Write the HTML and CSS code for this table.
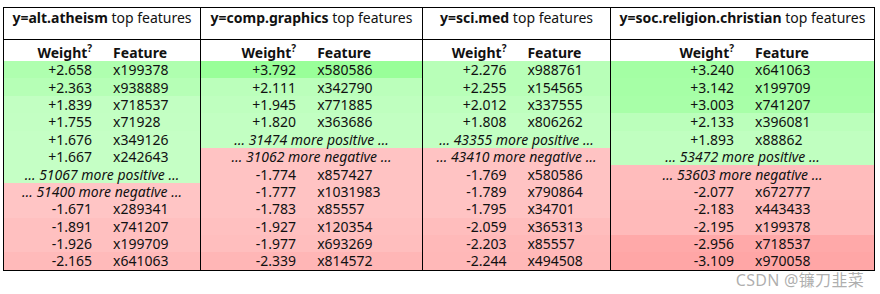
FILE: index.html
```html
<!DOCTYPE html>
<html lang="en">
<head>
  <meta charset="UTF-8">
  <title>eli5 weights</title>
  <link rel="stylesheet" href="styles.css">
</head>
<body>
  <table class="wrapper">
    <colgroup>
      <col class="c1"><col class="c2"><col class="c3"><col class="c4">
    </colgroup>
    <tr class="titles">
      <td><b>y=alt.atheism</b> top features</td>
      <td><b>y=comp.graphics</b> top features</td>
      <td><b>y=sci.med</b> top features</td>
      <td><b>y=soc.religion.christian</b> top features</td>
    </tr>
    <tr>
      <!-- alt.atheism -->
      <td>
        <table class="weights">
          <thead>
            <tr><th class="w">Weight<sup>?</sup></th><th class="f">Feature</th></tr>
          </thead>
          <tbody>
            <tr class="pos" style="--l: 84.4%"><td class="w">+2.658</td><td class="f">x199378</td></tr>
            <tr class="pos" style="--l: 85.6%"><td class="w">+2.363</td><td class="f">x938889</td></tr>
            <tr class="pos" style="--l: 88.0%"><td class="w">+1.839</td><td class="f">x718537</td></tr>
            <tr class="pos" style="--l: 88.3%"><td class="w">+1.755</td><td class="f">x71928</td></tr>
            <tr class="pos" style="--l: 88.7%"><td class="w">+1.676</td><td class="f">x349126</td></tr>
            <tr class="pos" style="--l: 88.7%"><td class="w">+1.667</td><td class="f">x242643</td></tr>
            <tr class="pos" style="--l: 88.7%"><td class="more" colspan="2">&hellip; 51067 more positive &hellip;</td></tr>
            <tr class="neg" style="--l: 88.7%"><td class="more" colspan="2">&hellip; 51400 more negative &hellip;</td></tr>
            <tr class="neg" style="--l: 88.7%"><td class="w">-1.671</td><td class="f">x289341</td></tr>
            <tr class="neg" style="--l: 87.7%"><td class="w">-1.891</td><td class="f">x741207</td></tr>
            <tr class="neg" style="--l: 87.6%"><td class="w">-1.926</td><td class="f">x199709</td></tr>
            <tr class="neg" style="--l: 86.5%"><td class="w">-2.165</td><td class="f">x641063</td></tr>
          </tbody>
        </table>
      </td>
      <!-- comp.graphics -->
      <td>
        <table class="weights">
          <thead>
            <tr><th class="w">Weight<sup>?</sup></th><th class="f">Feature</th></tr>
          </thead>
          <tbody>
            <tr class="pos" style="--l: 80.0%"><td class="w">+3.792</td><td class="f">x580586</td></tr>
            <tr class="pos" style="--l: 86.7%"><td class="w">+2.111</td><td class="f">x342790</td></tr>
            <tr class="pos" style="--l: 87.5%"><td class="w">+1.945</td><td class="f">x771885</td></tr>
            <tr class="pos" style="--l: 88.0%"><td class="w">+1.820</td><td class="f">x363686</td></tr>
            <tr class="pos" style="--l: 88.0%"><td class="more" colspan="2">&hellip; 31474 more positive &hellip;</td></tr>
            <tr class="neg" style="--l: 88.3%"><td class="more" colspan="2">&hellip; 31062 more negative &hellip;</td></tr>
            <tr class="neg" style="--l: 88.3%"><td class="w">-1.774</td><td class="f">x857427</td></tr>
            <tr class="neg" style="--l: 88.3%"><td class="w">-1.777</td><td class="f">x1031983</td></tr>
            <tr class="neg" style="--l: 88.2%"><td class="w">-1.783</td><td class="f">x85557</td></tr>
            <tr class="neg" style="--l: 87.6%"><td class="w">-1.927</td><td class="f">x120354</td></tr>
            <tr class="neg" style="--l: 87.3%"><td class="w">-1.977</td><td class="f">x693269</td></tr>
            <tr class="neg" style="--l: 85.7%"><td class="w">-2.339</td><td class="f">x814572</td></tr>
          </tbody>
        </table>
      </td>
      <!-- sci.med -->
      <td>
        <table class="weights">
          <thead>
            <tr><th class="w">Weight<sup>?</sup></th><th class="f">Feature</th></tr>
          </thead>
          <tbody>
            <tr class="pos" style="--l: 86.0%"><td class="w">+2.276</td><td class="f">x988761</td></tr>
            <tr class="pos" style="--l: 86.1%"><td class="w">+2.255</td><td class="f">x154565</td></tr>
            <tr class="pos" style="--l: 87.2%"><td class="w">+2.012</td><td class="f">x337555</td></tr>
            <tr class="pos" style="--l: 88.1%"><td class="w">+1.808</td><td class="f">x806262</td></tr>
            <tr class="pos" style="--l: 88.1%"><td class="more" colspan="2">&hellip; 43355 more positive &hellip;</td></tr>
            <tr class="neg" style="--l: 88.3%"><td class="more" colspan="2">&hellip; 43410 more negative &hellip;</td></tr>
            <tr class="neg" style="--l: 88.3%"><td class="w">-1.769</td><td class="f">x580586</td></tr>
            <tr class="neg" style="--l: 88.2%"><td class="w">-1.789</td><td class="f">x790864</td></tr>
            <tr class="neg" style="--l: 88.2%"><td class="w">-1.795</td><td class="f">x34701</td></tr>
            <tr class="neg" style="--l: 87.0%"><td class="w">-2.059</td><td class="f">x365313</td></tr>
            <tr class="neg" style="--l: 86.3%"><td class="w">-2.203</td><td class="f">x85557</td></tr>
            <tr class="neg" style="--l: 86.1%"><td class="w">-2.244</td><td class="f">x494508</td></tr>
          </tbody>
        </table>
      </td>
      <!-- soc.religion.christian -->
      <td>
        <table class="weights">
          <thead>
            <tr><th class="w">Weight<sup>?</sup></th><th class="f">Feature</th></tr>
          </thead>
          <tbody>
            <tr class="pos" style="--l: 82.1%"><td class="w">+3.240</td><td class="f">x641063</td></tr>
            <tr class="pos" style="--l: 82.5%"><td class="w">+3.142</td><td class="f">x199709</td></tr>
            <tr class="pos" style="--l: 83.0%"><td class="w">+3.003</td><td class="f">x741207</td></tr>
            <tr class="pos" style="--l: 86.6%"><td class="w">+2.133</td><td class="f">x396081</td></tr>
            <tr class="pos" style="--l: 87.7%"><td class="w">+1.893</td><td class="f">x88862</td></tr>
            <tr class="pos" style="--l: 87.7%"><td class="more" colspan="2">&hellip; 53472 more positive &hellip;</td></tr>
            <tr class="neg" style="--l: 86.9%"><td class="more" colspan="2">&hellip; 53603 more negative &hellip;</td></tr>
            <tr class="neg" style="--l: 86.9%"><td class="w">-2.077</td><td class="f">x672777</td></tr>
            <tr class="neg" style="--l: 86.4%"><td class="w">-2.183</td><td class="f">x443433</td></tr>
            <tr class="neg" style="--l: 86.4%"><td class="w">-2.195</td><td class="f">x199378</td></tr>
            <tr class="neg" style="--l: 83.2%"><td class="w">-2.956</td><td class="f">x718537</td></tr>
            <tr class="neg" style="--l: 82.6%"><td class="w">-3.109</td><td class="f">x970058</td></tr>
          </tbody>
        </table>
      </td>
    </tr>
  </table>

  <div class="watermark">CSDN @镰刀韭菜</div>
</body>
</html>
```

FILE: styles.css
```css
body {
  margin: 0;
  padding: 7px 0 0 3px;
  background: #fff;
  color: #111;
  font-family: "Noto Sans", "Noto Sans CJK SC", sans-serif;
  font-size: 14px;
  position: relative;
  height: 287px;
  overflow: hidden;
}
.wrapper {
  border-collapse: collapse;
  table-layout: fixed;
  width: 871px;
}
.wrapper .c1 { width: 197px; }
.wrapper .c2 { width: 222px; }
.wrapper .c3 { width: 188px; }
.wrapper .c4 { width: 264px; }
.wrapper > tbody > tr > td {
  padding: 0;
  border: 1px solid #000;
  vertical-align: top;
}
.titles td {
  text-align: center;
  height: 31px;
  line-height: 20px;
  white-space: nowrap;
}
/* inner weight tables */
.weights {
  border-collapse: collapse;
  width: 100%;
}
.weights th {
  height: 21px;
  padding: 0;
  line-height: 17px;
  vertical-align: bottom;
  font-weight: bold;
}
.weights sup {
  font-size: 10px;
  line-height: 0;
}
.weights td {
  padding: 0;
  height: 17.4px;
  line-height: 17px;
}
.weights .w {
  text-align: right;
  padding: 0 1em 0 0.5em;
}
.weights .f {
  text-align: left;
  padding: 0 0.5em 0 0.5em;
}
.weights .more {
  text-align: center;
  font-style: italic;
  padding: 0;
}
.pos { background-color: hsl(120, 100%, var(--l)); }
.neg { background-color: hsl(0, 100%, var(--l)); }

/* CSDN watermark under the bottom right corner */
.watermark {
  position: absolute;
  right: 16px;
  top: 273px;
  font-size: 16px;
  line-height: 14px;
  color: rgba(140, 140, 140, 0.7);
  letter-spacing: 0.3px;
}
```
